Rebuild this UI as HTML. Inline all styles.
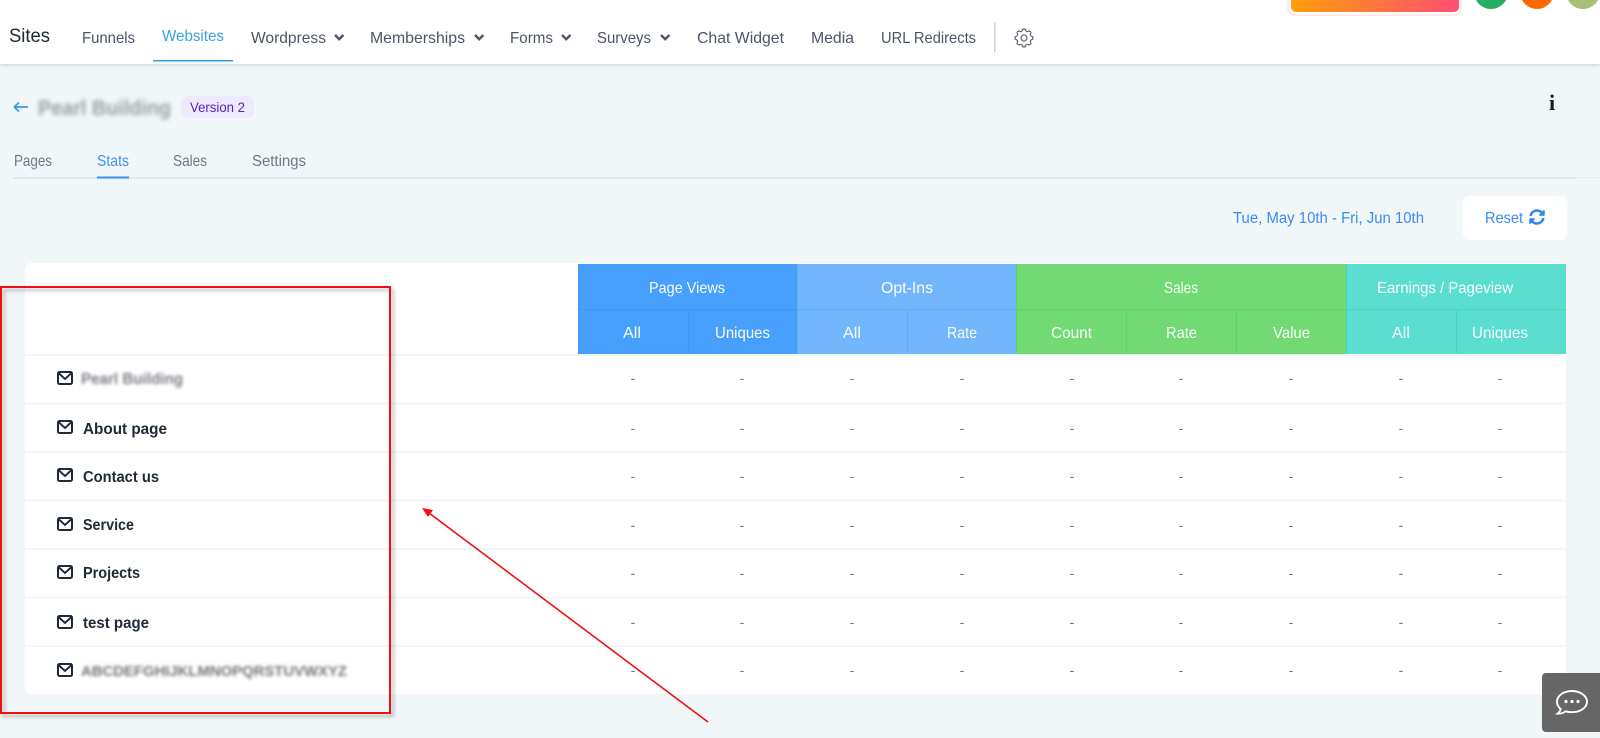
<!DOCTYPE html>
<html><head><meta charset="utf-8"><title>Sites</title>
<style>
html,body{margin:0;padding:0;width:1600px;height:738px;overflow:hidden;background:#f1f6f9}
svg{display:block;position:absolute;left:0;top:0}
text{font-family:"Liberation Sans",sans-serif}
.n{font-size:16px;fill:#4a5568}
.t{font-size:16px;fill:#6f7784}
.h{font-size:16px;fill:#fff;opacity:.96}
.b{font-size:16px;font-weight:bold;fill:#1f2937}
.d{font-size:14px;fill:#6b7280;text-anchor:middle}
</style></head><body>
<svg width="1600" height="738" viewBox="0 0 1600 738" xmlns="http://www.w3.org/2000/svg">
<defs>
<linearGradient id="g" x1="0" x2="1" y1="0" y2="0"><stop offset="0" stop-color="#ff9f0a"/><stop offset="1" stop-color="#ff4d72"/></linearGradient>
<filter id="bl" x="-10%" y="-60%" width="120%" height="220%"><feGaussianBlur stdDeviation="1.500"/></filter>
<filter id="bl2" x="-10%" y="-60%" width="120%" height="220%"><feGaussianBlur stdDeviation="2.200"/></filter>
<filter id="hs" x="-2%" y="-20%" width="104%" height="140%"><feDropShadow dx="0" dy="1" stdDeviation="2" flood-color="#000" flood-opacity=".16"/></filter>
<filter id="rs" x="-3%" y="-3%" width="106%" height="106%"><feDropShadow dx="3" dy="3" stdDeviation="1.500" flood-color="#333" flood-opacity=".35"/></filter>
<g id="m" fill="none" stroke="#1f2937">
<rect x="1" y="1" width="14" height="12" rx="1.500" stroke-width="2"/>
<path d="M1.500 2l6.500 6 6.500-6" stroke-width="1.900"/>
</g>
<path id="c" d="M0 0l4.200 4.200 4.200-4.200" fill="none" stroke="#4a5568" stroke-width="2.400"/>
<g id="ds"><text class="d" x="633">-</text><text class="d" x="742">-</text><text class="d" x="852">-</text><text class="d" x="962">-</text><text class="d" x="1072">-</text><text class="d" x="1181">-</text><text class="d" x="1291">-</text><text class="d" x="1401">-</text><text class="d" x="1500">-</text></g>
</defs>

<rect width="1600" height="738" fill="#f1f6f9"/>

<!-- top nav -->
<rect width="1600" height="64" fill="#fff" filter="url(#hs)"/>
<text x="9" y="42" font-size="19" fill="#1f2937" textLength="41" lengthAdjust="spacingAndGlyphs">Sites</text>
<text class="n" x="82" y="43" textLength="53" lengthAdjust="spacingAndGlyphs">Funnels</text>
<text x="162" y="41" font-size="16" fill="#35a0e6" textLength="62" lengthAdjust="spacingAndGlyphs">Websites</text>
<rect x="153" y="60" width="80" height="1.500" fill="#2a9ee6"/>
<text class="n" x="251" y="43" textLength="75" lengthAdjust="spacingAndGlyphs">Wordpress</text>
<use href="#c" x="335" y="35"/>
<text class="n" x="370" y="43" textLength="95" lengthAdjust="spacingAndGlyphs">Memberships</text>
<use href="#c" x="475" y="35"/>
<text class="n" x="510" y="43" textLength="43" lengthAdjust="spacingAndGlyphs">Forms</text>
<use href="#c" x="562" y="35"/>
<text class="n" x="597" y="43" textLength="54" lengthAdjust="spacingAndGlyphs">Surveys</text>
<use href="#c" x="661" y="35"/>
<text class="n" x="697" y="43" textLength="87" lengthAdjust="spacingAndGlyphs">Chat Widget</text>
<text class="n" x="811" y="43" textLength="43" lengthAdjust="spacingAndGlyphs">Media</text>
<text class="n" x="881" y="43" textLength="95" lengthAdjust="spacingAndGlyphs">URL Redirects</text>
<rect x="994" y="22" width="1.500" height="30" fill="#cbd2da"/>
<g transform="translate(1012 26)" fill="none" stroke="#5b6470" stroke-width="1.200">
<path d="M10.325 4.317c.426-1.756 2.924-1.756 3.350 0a1.724 1.724 0 002.573 1.066c1.543-.94 3.310.826 2.370 2.370a1.724 1.724 0 001.065 2.572c1.756.426 1.756 2.924 0 3.350a1.724 1.724 0 00-1.066 2.573c.94 1.543-.826 3.310-2.370 2.370a1.724 1.724 0 00-2.572 1.065c-.426 1.756-2.924 1.756-3.350 0a1.724 1.724 0 00-2.573-1.066c-1.543.94-3.310-.826-2.370-2.370a1.724 1.724 0 00-1.065-2.572c-1.756-.426-1.756-2.924 0-3.350a1.724 1.724 0 001.066-2.573c-.94-1.543.826-3.310 2.370-2.370.996.608 2.296.07 2.572-1.065z"/><circle cx="12" cy="12" r="3"/>
</g>
<rect x="1288" y="-20" width="173" height="35" rx="6" fill="#fff" stroke="#ffe3e3" stroke-width="1.500"/>
<rect x="1291" y="-20" width="168" height="32" rx="5" fill="url(#g)"/>
<circle cx="1491" cy="-8" r="17" fill="#27ae60"/>
<circle cx="1537" cy="-8" r="17" fill="#ff6a00"/>
<circle cx="1583" cy="-8" r="17" fill="#a8bf78"/>

<!-- title row -->
<path d="M14 107h14M14 107l5-4.500M14 107l5 4.500" fill="none" stroke="#3b9ae8" stroke-width="1.700"/>
<text x="38" y="115" font-size="21" font-weight="bold" fill="#9a9fa4" filter="url(#bl2)" textLength="133" lengthAdjust="spacingAndGlyphs">Pearl Building</text>
<rect x="181" y="96" width="73" height="22" rx="6" fill="#ede9fe"/>
<text x="190" y="112" font-size="14" fill="#5b21b6" textLength="55" lengthAdjust="spacingAndGlyphs">Version 2</text>
<text x="1552" y="110" font-size="22" font-weight="bold" fill="#111827" text-anchor="middle" style="font-family:'Liberation Serif',serif">i</text>

<!-- tabs -->
<rect x="13" y="177" width="1564" height="2" fill="#e2e8ee"/>
<rect x="1577" y="177" width="23" height="1" fill="#e8edf2"/>
<text class="t" x="14" y="166" textLength="38" lengthAdjust="spacingAndGlyphs">Pages</text>
<text x="97" y="166" font-size="16" fill="#3f93ee" textLength="32" lengthAdjust="spacingAndGlyphs">Stats</text>
<rect x="97" y="176.500" width="32" height="2" fill="#3f93ee"/>
<text class="t" x="173" y="166" textLength="34" lengthAdjust="spacingAndGlyphs">Sales</text>
<text class="t" x="252" y="166" textLength="54" lengthAdjust="spacingAndGlyphs">Settings</text>

<!-- date / reset -->
<text x="1233" y="223" font-size="15.500" fill="#3b8bf0" textLength="191" lengthAdjust="spacingAndGlyphs">Tue, May 10th - Fri, Jun 10th</text>
<rect x="1463" y="196" width="104" height="44" rx="6" fill="#fff"/>
<text x="1485" y="223" font-size="16" fill="#3b8bf0" textLength="38" lengthAdjust="spacingAndGlyphs">Reset</text>
<path transform="translate(1529 209) scale(.0312)" fill="#2a86f0" d="M370.720 133.280C339.458 104.008 298.888 87.962 255.848 88c-77.458.068-144.328 53.178-162.791 126.850-1.344 5.363-6.122 9.150-11.651 9.150H24.103c-7.498 0-13.194-6.807-11.807-14.176C33.933 94.924 134.813 8 256 8c66.448 0 126.791 26.136 171.315 68.685L463.030 40.970C478.149 25.851 504 36.559 504 57.941V192c0 13.255-10.745 24-24 24H345.941c-21.382 0-32.090-25.851-16.971-40.971l41.750-41.749zM32 296h134.059c21.382 0 32.090 25.851 16.971 40.971l-41.750 41.750c31.262 29.273 71.835 45.319 114.876 45.280 77.418-.07 144.315-53.144 162.787-126.849 1.344-5.363 6.122-9.150 11.651-9.150h57.304c7.498 0 13.194 6.807 11.807 14.176C478.067 417.076 377.187 504 256 504c-66.448 0-126.791-26.136-171.315-68.685L48.970 471.030C33.851 486.149 8 475.441 8 454.059V320c0-13.255 10.745-24 24-24z"/>

<!-- table card -->
<rect x="25" y="263" width="1541" height="431" rx="6" fill="#fff"/>
<g fill="#f1f6f9">
<rect x="25" y="354" width="1541" height="2"/>
<rect x="25" y="402.500" width="1541" height="2"/>
<rect x="25" y="451" width="1541" height="2"/>
<rect x="25" y="499.500" width="1541" height="2"/>
<rect x="25" y="548" width="1541" height="2"/>
<rect x="25" y="596.500" width="1541" height="2"/>
<rect x="25" y="645" width="1541" height="2"/>
</g>

<!-- colored header -->
<rect x="578" y="264" width="219" height="90" fill="#47a0fb"/>
<rect x="797" y="264" width="219" height="90" fill="#72b6fb"/>
<rect x="1016" y="264" width="330" height="90" fill="#72da74"/>
<rect x="1346" y="264" width="220" height="90" fill="#5bddd0"/>
<g fill="#3a97f8">
<rect x="578" y="309" width="219" height="1"/><rect x="688" y="309" width="1" height="45"/><rect x="578" y="264" width="1" height="90"/>
</g>
<g fill="#5dabfa"><rect x="797" y="309" width="219" height="1"/><rect x="907" y="309" width="1" height="45"/><rect x="797" y="264" width="1" height="90"/></g>
<g fill="#5fd463"><rect x="1016" y="309" width="330" height="1"/><rect x="1126" y="309" width="1" height="45"/><rect x="1236" y="309" width="1" height="45"/><rect x="1016" y="264" width="1" height="90"/></g>
<g fill="#42d6c7"><rect x="1346" y="309" width="220" height="1"/><rect x="1456" y="309" width="1" height="45"/><rect x="1346" y="264" width="1" height="90"/></g>

<text class="h" x="649" y="293" textLength="76" lengthAdjust="spacingAndGlyphs">Page Views</text>
<text class="h" x="881" y="293" textLength="52" lengthAdjust="spacingAndGlyphs">Opt-Ins</text>
<text class="h" x="1164" y="293" textLength="34" lengthAdjust="spacingAndGlyphs">Sales</text>
<text class="h" x="1377" y="293" textLength="136" lengthAdjust="spacingAndGlyphs">Earnings / Pageview</text>
<text class="h" x="623" y="338" textLength="18" lengthAdjust="spacingAndGlyphs">All</text>
<text class="h" x="715" y="338" textLength="55" lengthAdjust="spacingAndGlyphs">Uniques</text>
<text class="h" x="843" y="338" textLength="18" lengthAdjust="spacingAndGlyphs">All</text>
<text class="h" x="947" y="338" textLength="30" lengthAdjust="spacingAndGlyphs">Rate</text>
<text class="h" x="1051" y="338" textLength="41" lengthAdjust="spacingAndGlyphs">Count</text>
<text class="h" x="1166" y="338" textLength="31" lengthAdjust="spacingAndGlyphs">Rate</text>
<text class="h" x="1273" y="338" textLength="37" lengthAdjust="spacingAndGlyphs">Value</text>
<text class="h" x="1392" y="338" textLength="18" lengthAdjust="spacingAndGlyphs">All</text>
<text class="h" x="1472" y="338" textLength="56" lengthAdjust="spacingAndGlyphs">Uniques</text>

<!-- row labels -->
<use href="#m" x="57" y="371"/><text x="81" y="384" font-size="16" font-weight="bold" fill="#7a7f85" filter="url(#bl)" textLength="102" lengthAdjust="spacingAndGlyphs">Pearl Building</text>
<use href="#m" x="57" y="420"/><text class="b" x="83" y="434" textLength="84" lengthAdjust="spacingAndGlyphs">About page</text>
<use href="#m" x="57" y="468"/><text class="b" x="83" y="482" textLength="76" lengthAdjust="spacingAndGlyphs">Contact us</text>
<use href="#m" x="57" y="517"/><text class="b" x="83" y="530" textLength="51" lengthAdjust="spacingAndGlyphs">Service</text>
<use href="#m" x="57" y="565"/><text class="b" x="83" y="578" textLength="57" lengthAdjust="spacingAndGlyphs">Projects</text>
<use href="#m" x="57" y="615"/><text class="b" x="83" y="628" textLength="66" lengthAdjust="spacingAndGlyphs">test page</text>
<use href="#m" x="57" y="663"/><text x="81" y="676" font-size="15" font-weight="bold" fill="#70757c" filter="url(#bl)" textLength="266" lengthAdjust="spacingAndGlyphs">ABCDEFGHIJKLMNOPQRSTUVWXYZ</text>

<!-- dashes -->
<use href="#ds" y="383"/><use href="#ds" y="433"/><use href="#ds" y="481"/><use href="#ds" y="530"/><use href="#ds" y="578"/><use href="#ds" y="627"/><use href="#ds" y="675"/>

<!-- annotations -->
<rect x="1" y="287" width="389" height="426" fill="none" stroke="#f40f0f" stroke-width="2" filter="url(#rs)"/>
<path d="M708 722L429 513" stroke="#f01010" stroke-width="1.600" fill="none"/>
<path d="M422 508l11 2-5 7z" fill="#f40f0f"/>

<!-- chat widget -->
<rect x="1542" y="673" width="64" height="59" rx="4" fill="#666"/>
<path d="M1572 691c-8.500 0-15 4.700-15 10.800 0 2.800 1.400 5.300 3.700 7.200-.3 1.800-1.500 3.400-3.200 4.600 3 .3 5.800-.5 8-2.300 2 .6 4.200 .9 6.500 .9 8.500 0 15-4.700 15-10.400s-6.500-10.800-15-10.800z" fill="none" stroke="#fff" stroke-width="1.900"/>
<circle cx="1566" cy="701.500" r="1.600" fill="#fff"/><circle cx="1572" cy="701.500" r="1.600" fill="#fff"/><circle cx="1578" cy="701.500" r="1.600" fill="#fff"/>
</svg>
</body></html>
